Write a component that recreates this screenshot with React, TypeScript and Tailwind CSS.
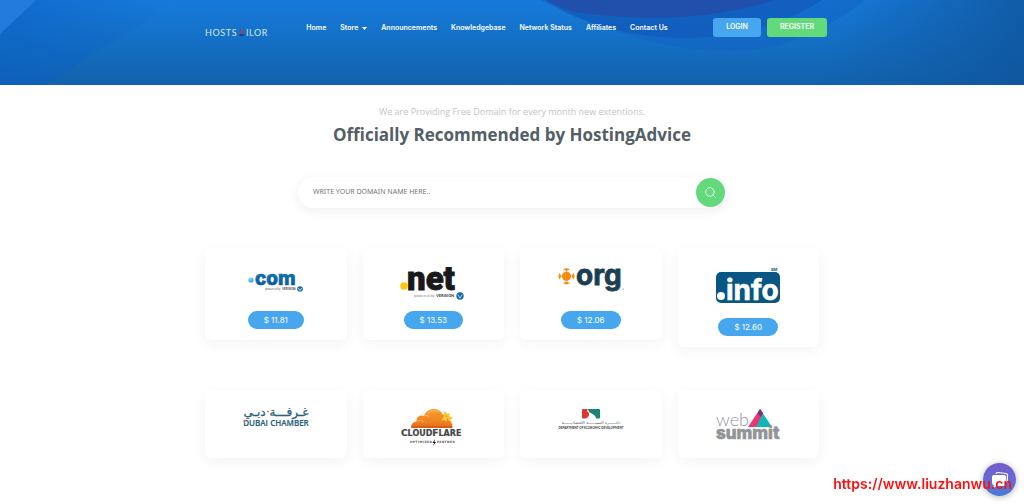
import { ReactNode } from "react";
import clsx from "clsx";
import { Search } from "lucide-react";

const NAV_LINKS = [
  { label: "Home" },
  { label: "Store", menu: true },
  { label: "Announcements" },
  { label: "Knowledgebase" },
  { label: "Network Status" },
  { label: "Affiliates" },
  { label: "Contact Us" },
];

function HeaderBackdrop() {
  return (
    <svg
      className="pointer-events-none absolute inset-0 h-full w-full"
      viewBox="0 0 1024 85"
      preserveAspectRatio="none"
      aria-hidden
    >
      <defs>
        <linearGradient id="sky" x1="0" y1="0" x2="0" y2="1">
          <stop offset="0" stopColor="#177bdc" />
          <stop offset="0.5" stopColor="#146fc4" />
          <stop offset="1" stopColor="#1262ac" />
        </linearGradient>
        <linearGradient id="left" x1="0" y1="0" x2="1" y2="0">
          <stop offset="0" stopColor="#0a5fc4" stopOpacity="0.55" />
          <stop offset="1" stopColor="#0a5fc4" stopOpacity="0" />
        </linearGradient>
        <linearGradient id="right" x1="0" y1="0" x2="1" y2="0">
          <stop offset="0" stopColor="#0f549b" stopOpacity="0" />
          <stop offset="1" stopColor="#0f549b" stopOpacity="0.8" />
        </linearGradient>
      </defs>
      <rect width="1024" height="85" fill="url(#sky)" />
      <path d="M0 0H180L45 85H0Z" fill="url(#left)" />
      <path d="M0 0H36L0 34Z" fill="#247bde" />
      <rect x="820" width="204" height="85" fill="url(#right)" />
      <path d="M540 0C590 22 650 51 732 51C790 51 835 24 864 0Z" fill="#1264c4" opacity="0.6" />
      <path d="M546 0C580 26 640 38 684 38C750 38 795 18 822 0Z" fill="#115abb" opacity="0.7" />
      <path d="M546 0C553 4 560 7 570 11C610 18 700 25 774 0Z" fill="#214fac" />
    </svg>
  );
}

function HostSailorLogo() {
  return (
    <svg className="block h-3 w-16 overflow-visible" viewBox="0 0 64 12" role="img" aria-label="HostSailor">
      <g fill="#d5e7f8" fontFamily="Lato, sans-serif" fontSize="9">
        <text x="0" y="9" letterSpacing="0.6">HOSTS</text>
        <text x="41" y="9" letterSpacing="0.6">ILOR</text>
      </g>
      <path d="M37 2L39 6H34.500Z" fill="#c5304c" />
      <path d="M34 7H39.500L38.500 9H35Z" fill="#1d3f8f" />
    </svg>
  );
}

function Verisign({ x, y, r }: { x: number; y: number; r: number }) {
  return (
    <g>
      <circle cx={x} cy={y} r={r} fill="#1769ab" />
      <path
        d={`M${x - r * 0.6} ${y - r * 0.4}L${x} ${y + r * 0.6}L${x + r * 0.6} ${y - r * 0.4}`}
        fill="none"
        stroke="#d9edf9"
        strokeWidth="0.8"
      />
    </g>
  );
}

function ComLogo() {
  return (
    <svg className="h-8 w-[66px] overflow-visible" viewBox="0 0 66 32" role="img" aria-label=".com">
      <defs>
        <radialGradient id="comDot" cx="0.4" cy="0.3" r="0.8">
          <stop offset="0" stopColor="#7edcff" />
          <stop offset="1" stopColor="#1796d6" />
        </radialGradient>
        <linearGradient id="comText" x1="0" y1="0" x2="0" y2="1">
          <stop offset="0" stopColor="#0b85c8" />
          <stop offset="1" stopColor="#0a4f92" />
        </linearGradient>
      </defs>
      <circle cx="8" cy="12" r="2.600" fill="url(#comDot)" />
      <text x="12" y="17" fill="url(#comText)" stroke="#0a62a5" strokeWidth="0.6" fontFamily="Inter, sans-serif" fontWeight="800" fontSize="19">com</text>
      <text x="22" y="22" fill="#666" fontFamily="Lato, sans-serif" fontSize="3">powered by</text>
      <text x="39" y="22" fill="#444" fontFamily="Lato, sans-serif" fontWeight="700" fontSize="3">VERISIGN</text>
      <Verisign x={57} y={21} r={2.8} />
    </svg>
  );
}

function NetLogo() {
  return (
    <svg className="h-8 w-[66px] overflow-visible" viewBox="0 0 66 32" role="img" aria-label=".net">
      <circle cx="4" cy="18" r="3.700" fill="#fdc90d" />
      <text x="7" y="22" fill="#191919" stroke="#191919" strokeWidth="0.8" fontFamily="Roboto, sans-serif" fontWeight="900" fontSize="33">net</text>
      <text x="14" y="29" fill="#888" fontFamily="Lato, sans-serif" fontSize="4">powered by</text>
      <text x="36" y="29" fill="#333" fontFamily="Lato, sans-serif" fontWeight="700" fontSize="4">VERISIGN</text>
      <Verisign x={60} y={28} r={3.7} />
    </svg>
  );
}

function OrgLogo() {
  return (
    <svg className="h-8 w-[66px] overflow-visible" viewBox="0 0 66 32" role="img" aria-label=".org">
      <g fill="#f98b0c">
        <circle cx="8.500" cy="8.300" r="4.500" />
        <path d="M8.500 3L13.800 8.300L8.500 13.600L3.200 8.300Z" />
        <path d="M5.200 1.600Q8.500 -1.200 11.800 1.600L8.500 3Z" />
        <path d="M5.200 15Q8.500 17.800 11.800 15L8.500 13.600Z" />
        <path d="M1.800 5Q-1 8.300 1.800 11.600L3.200 8.300Z" />
        <path d="M15.200 5Q18 8.300 15.200 11.600L13.800 8.300Z" />
      </g>
      <text x="18" y="17" fill="#193f52" stroke="#193f52" strokeWidth="0.8" fontFamily="Inter, sans-serif" fontWeight="700" fontSize="28">org</text>
      <circle cx="65" cy="21" r="0.500" fill="#193f52" />
    </svg>
  );
}

function InfoLogo() {
  return (
    <svg className="h-[39px] w-[66px] overflow-visible" viewBox="0 0 66 39" role="img" aria-label=".info">
      <rect x="1" y="4" width="64" height="31" rx="5" fill="#075683" />
      <circle cx="6" cy="28" r="4" fill="#fff" />
      <text x="11" y="32" fill="#fff" stroke="#fff" strokeWidth="0.6" fontFamily="Inter, sans-serif" fontWeight="700" fontSize="28">info</text>
      <text x="56" y="3" fill="#075683" fontFamily="Inter, sans-serif" fontWeight="700" fontSize="4">SM</text>
    </svg>
  );
}

function DubaiChamberLogo() {
  return (
    <svg className="h-[38px] w-[66px] overflow-visible" viewBox="0 0 66 38" role="img" aria-label="Dubai Chamber">
      <text x="33" y="8" textAnchor="middle" fill="#2a6080" stroke="#2a6080" strokeWidth="0.3" fontFamily="'DejaVu Sans', sans-serif" fontSize="12">غـرفـــة دبـي</text>
      <text x="33" y="18" textAnchor="middle" fill="#28617f" stroke="#28617f" strokeWidth="0.2" fontFamily="'Open Sans', sans-serif" fontWeight="600" fontSize="8">DUBAI CHAMBER</text>
      <path d="M0.500 12.500H3M24 3L26 4" stroke="#ee6b3f" strokeWidth="1.300" />
    </svg>
  );
}

function CloudflareLogo() {
  return (
    <svg className="h-[38px] w-[66px] overflow-visible" viewBox="0 0 66 38" role="img" aria-label="Cloudflare optimized partner">
      <defs>
        <linearGradient id="cloud" x1="0" y1="0" x2="0" y2="1">
          <stop offset="0" stopColor="#f7a033" />
          <stop offset="0.7" stopColor="#f0801f" />
          <stop offset="1" stopColor="#e06a1a" />
        </linearGradient>
      </defs>
      <path d="M45 3L47 6L50 5L49 8L53 10L50 12L52 14H40Z" fill="#fbc52e" />
      <path
        d="M11 20C11 16 13 14 16.500 13.500C16 9 20 6.500 24 8C27 -0.500 39 -1.500 43 7C47 6.500 49 10 48 12.500C51 13 53 16 52.500 20Z"
        fill="url(#cloud)"
      />
      <path d="M17 13C19 12 22 12.500 24 14M24 8C26 7 28 7.500 29 8.500M28 5C31 2 36 2 39 4" fill="none" stroke="#ffc273" strokeWidth="0.800" />
      <path d="M12 19H52" stroke="#c94c19" strokeWidth="1.200" />
      <path d="M45 6L45.800 9L49 9.500L46.500 11L47 13.500L44 12L41 12.500L43 10.500Z" fill="#ffd33c" />
      <g fill="#454545" stroke="#454545" strokeWidth="0.2" fontFamily="'DejaVu Sans', sans-serif" fontWeight="700">
        <text x="1" y="28"><tspan fontSize="9">C</tspan><tspan fontSize="8">LOUD</tspan><tspan fontSize="9">F</tspan><tspan fontSize="8">LARE</tspan></text>
      </g>
      <g fill="#555" fontFamily="'DejaVu Sans', sans-serif" fontWeight="700" fontSize="3">
        <text x="10" y="35" letterSpacing="0.4">OPTIMIZED</text>
        <text x="37" y="35" letterSpacing="0.4">PARTNER</text>
      </g>
      <path d="M35 31L32.500 35H34L33 38L36 34H34.500Z" fill="#222" />
    </svg>
  );
}

function EconomicLogo() {
  return (
    <svg className="h-[38px] w-[66px] overflow-visible" viewBox="0 0 66 38" role="img" aria-label="Department of Economic Development">
      <path d="M25 1H30Q28 3 31 5Q32 8 28 10.500H25Q24 10.500 24 9.500V2Q24 1 25 1Z" fill="#d93a38" />
      <path d="M30 1H41Q42 1 42 2V9.500Q42 10.500 41 10.500H38C38 7 34 6 31 4Z" fill="#188474" />
      <text x="33" y="16" textAnchor="middle" fill="#555" fontFamily="'DejaVu Sans', sans-serif" fontSize="4">دائــــــرة التنميــــــة الاقتصاديــــــة</text>
      <text x="33" y="21" textAnchor="middle" fill="#333" fontFamily="Lato, sans-serif" fontWeight="700" fontSize="3">DEPARTMENT OF ECONOMIC DEVELOPMENT</text>
    </svg>
  );
}

function WebSummitLogo() {
  return (
    <svg className="h-[38px] w-[66px] overflow-visible" viewBox="0 0 66 38" role="img" aria-label="Web Summit">
      <path d="M45 1L57 19H40Z" fill="#0db7b8" />
      <path d="M45 1L48 5L41 19H33Z" fill="#ef3473" />
      <path d="M45 1L48 5.500L45.500 9L42.500 5Z" fill="#70376f" />
      <text x="1" y="18" fill="#929497" fontFamily="Lato, sans-serif" fontWeight="300" fontSize="18">web</text>
      <text x="1" y="31" fill="#929497" stroke="#929497" strokeWidth="0.6" fontFamily="Inter, sans-serif" fontWeight="800" fontSize="17">summit</text>
    </svg>
  );
}

const DOMAINS = [
  { name: "com", logo: <ComLogo />, price: "$ 11.81" },
  { name: "net", logo: <NetLogo />, price: "$ 13.53" },
  { name: "org", logo: <OrgLogo />, price: "$ 12.06" },
  { name: "info", logo: <InfoLogo />, price: "$ 12.60" },
];

const PARTNERS = [
  { name: "dubai-chamber", logo: <DubaiChamberLogo /> },
  { name: "cloudflare", logo: <CloudflareLogo /> },
  { name: "economic-development", logo: <EconomicLogo /> },
  { name: "web-summit", logo: <WebSummitLogo /> },
];

function Card({ className, children }: { className?: string; children: ReactNode }) {
  return (
    <div
      className={clsx(
        "flex flex-col items-center rounded-md bg-white px-4 shadow-[0_4px_14px_rgba(0,0,0,0.05)]",
        className,
      )}
    >
      {children}
    </div>
  );
}

export default function App() {
  return (
    <div className="min-h-screen bg-white font-['Inter',sans-serif]">
      <header className="relative h-[85px] overflow-hidden">
        <HeaderBackdrop />
        <div className="relative mx-auto flex max-w-[630px] items-start justify-between pt-[18px] pl-2">
          <a href="#home" className="pt-[9px]">
            <HostSailorLogo />
          </a>
          <nav className="ml-4 flex h-5 items-center gap-[14px]">
            {NAV_LINKS.map((link) => (
              <a
                key={link.label}
                href="#"
                className="flex items-center gap-1 text-[7px] font-semibold whitespace-nowrap text-white"
              >
                {link.label}
                {link.menu && (
                  <svg className="h-[3px] w-[5px]" viewBox="0 0 5 3" aria-hidden>
                    <path d="M0 0H5L2.500 3Z" fill="currentColor" />
                  </svg>
                )}
              </a>
            ))}
          </nav>
          <div className="ml-6 flex gap-[6px] text-[7px] font-semibold text-white">
            <button type="button" className="h-[19px] w-12 rounded-[3px] bg-[#46a7ee]">
              LOGIN
            </button>
            <button type="button" className="h-[19px] w-[60px] rounded-[3px] bg-[#62d97b]">
              REGISTER
            </button>
          </div>
        </div>
      </header>

      <main className="mx-auto max-w-[614px] pt-4 pb-11">
        <p className="text-center font-['Open_Sans',sans-serif] text-[9px] leading-[22px] text-[#c0c5c8]">
          We are Providing Free Domain for every month new extentions.
        </p>
        <h1 className="text-center font-['Open_Sans',sans-serif] text-[17px] leading-6 font-bold text-[#535e66]">
          Officially Recommended by HostingAdvice
        </h1>

        <form
          className="mx-auto mt-[30px] flex h-[31px] max-w-[428px] items-center rounded-full bg-white pr-px pl-[15px] shadow-[0_3px_12px_rgba(0,0,0,0.07)]"
          onSubmit={(e) => e.preventDefault()}
        >
          <input
            type="text"
            aria-label="Domain name"
            placeholder="WRITE YOUR DOMAIN NAME HERE.."
            className="min-w-0 flex-1 bg-transparent font-['Noto_Sans',sans-serif] text-[7px] text-gray-700 outline-none placeholder:text-[#777]"
          />
          <button
            type="submit"
            aria-label="Search"
            className="flex size-[29px] items-center justify-center rounded-full bg-[#62d97b] text-white"
          >
            <Search size={13} strokeWidth={1.5} />
          </button>
        </form>

        <section className="mt-10 grid grid-cols-4 items-start gap-4">
          {DOMAINS.map((domain) => (
            <Card key={domain.name} className="pt-5 pb-[11px]">
              {domain.logo}
              <span className="mt-[11px] rounded-full bg-[#46a7ee] px-4 text-[8px] leading-[18px] text-white">
                {domain.price}
              </span>
            </Card>
          ))}
        </section>

        <section className="mt-[43px] grid grid-cols-4 gap-4">
          {PARTNERS.map((partner) => (
            <Card key={partner.name} className="pt-[18px] pb-3">
              {partner.logo}
            </Card>
          ))}
        </section>
      </main>

      <button
        type="button"
        aria-label="Open chat"
        className="fixed right-2 bottom-2 flex size-[33px] items-center justify-center rounded-full bg-linear-to-b from-[#7659cc] to-[#467bd8] shadow-[0_1px_6px_rgba(0,0,0,0.3)]"
      >
        <svg className="size-[18px]" viewBox="0 0 18 18" aria-hidden>
          <path d="M5 3Q5 1.500 7 1.500L15 2.500Q17 3 16.500 5L16 12" fill="none" stroke="#fff" strokeWidth="1.200" />
          <path d="M3 4H13Q15 4 15 6V13Q15 15 13 15H6L2 17L3 14Q1 14 1 12V6Q1 4 3 4Z" fill="#fff" />
        </svg>
      </button>
      <p className="pointer-events-none fixed right-3 bottom-3 text-[14px] leading-4 font-semibold text-[#ff0f0f]">
        https://www.liuzhanwu.cn
      </p>
    </div>
  );
}
